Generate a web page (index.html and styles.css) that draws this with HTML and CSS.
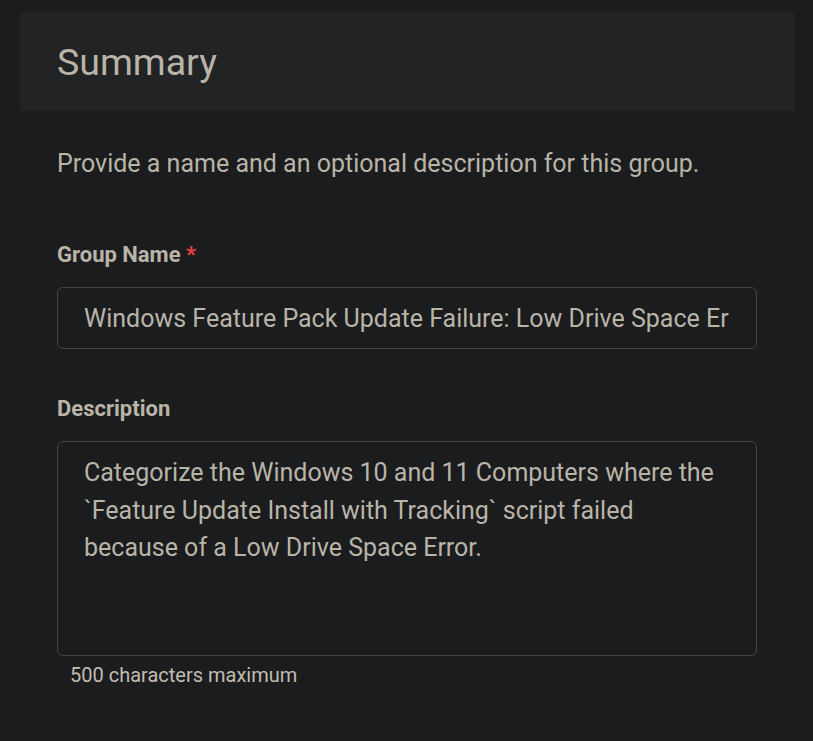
FILE: index.html
```html
<!DOCTYPE html>
<html lang="en">
<head>
<meta charset="utf-8">
<title>Summary</title>
<link rel="stylesheet" href="styles.css">
</head>
<body>
<div class="card">
  <div class="card-header">
    <h1 class="title">Summary</h1>
  </div>
  <div class="card-body">
    <p class="intro">Provide a name and an optional description for this group.</p>
    <div class="field">
      <label class="label" for="gname">Group Name <span class="req">*</span></label>
      <input id="gname" class="input" type="text" value="Windows Feature Pack Update Failure: Low Drive Space Error">
    </div>
    <div class="field">
      <label class="label" for="gdesc">Description</label>
      <textarea id="gdesc" class="textarea">Categorize the Windows 10 and 11 Computers where the `Feature Update Install with Tracking` script failed because of a Low Drive Space Error.</textarea>
      <div class="hint">500 characters maximum</div>
    </div>
  </div>
</div>
</body>
</html>
```
FILE: styles.css
```css
html, body {
  margin: 0;
  padding: 0;
  background: #1b1c1e;
  font-family: Roboto, "Noto Sans", sans-serif;
  color: #bab4a8;
}
.card {
  margin: 12px 18px 0 20px;
}
.card-header {
  background: #222325;
  height: 99px;
  display: flex;
  align-items: center;
  padding-left: 37px;
  border-radius: 3px 3px 0 0;
}
.title {
  margin: 0;
  font-size: 37.5px;
  font-weight: 400;
  color: #bab4a8;
}
.card-body {
  padding: 0 0 0 37px;
}
.intro {
  margin: 38px 0 0;
  font-size: 25px;
  line-height: 30px;
}
.field {
  display: flex;
  flex-direction: column;
  width: 700px;
}
.label {
  font-size: 22px;
  font-weight: 700;
  margin-top: 63px;
  margin-bottom: 19px;
  line-height: 26px;
}
.field + .field .label {
  margin-top: 47px;
}
.req {
  color: #e5413f;
}
.input, .textarea {
  box-sizing: border-box;
  width: 700px;
  background: #1b1c1e;
  border: 1px solid #434446;
  border-radius: 6px;
  color: #bab4a8;
  font-family: Roboto, "Noto Sans", sans-serif;
  font-size: 25px;
  outline: none;
}
.input {
  height: 62px;
  padding: 0 26px;
}
.textarea {
  height: 215px;
  padding: 12px 26px;
  line-height: 37.5px;
  resize: none;
  overflow: hidden;
}
.hint {
  font-size: 20px;
  line-height: 24px;
  margin: 7px 0 0 13px;
  color: #c2bcb1;
}
```
